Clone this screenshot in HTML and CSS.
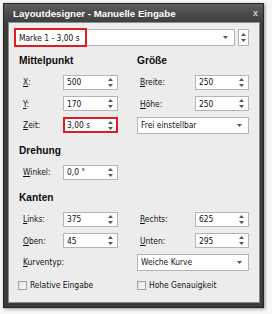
FILE: index.html
```html
<!DOCTYPE html>
<html>
<head>
<meta charset="utf-8">
<link rel="stylesheet" href="styles.css">
</head>
<body>
<div class="window">
  <div class="titlebar">
    <span class="title">Layoutdesigner - Manuelle Eingabe</span>
    <span class="close">x</span>
  </div>
  <div class="content">
    <div class="toprow">
      <div class="combo wide"><span class="hl">Marke 1 - 3,00 s</span><svg class="dd" width="5" height="3" viewBox="0 0 5 3"><path d="M0 0H5L2.5 3Z"/></svg></div>
      <div class="spinbtn"><svg width="5" height="9" viewBox="0 0 5 9"><path d="M2.5 0L5 3H0Z M0 6H5L2.5 9Z"/></svg></div>
    </div>

    <div class="cols">
      <div class="col left">
        <div class="heading">Mittelpunkt</div>
        <div class="row"><label><u>X</u>:</label><div class="spin"><span>500</span><svg width="5" height="9" viewBox="0 0 5 9"><path d="M2.5 0L5 3H0Z M0 6H5L2.5 9Z"/></svg></div></div>
        <div class="row"><label><u>Y</u>:</label><div class="spin"><span>170</span><svg width="5" height="9" viewBox="0 0 5 9"><path d="M2.5 0L5 3H0Z M0 6H5L2.5 9Z"/></svg></div></div>
        <div class="row"><label><u>Z</u>eit:</label><div class="spin red"><span>3,00 s</span><svg width="5" height="9" viewBox="0 0 5 9"><path d="M2.5 0L5 3H0Z M0 6H5L2.5 9Z"/></svg></div></div>
      </div>
      <div class="col right">
        <div class="heading">Größe</div>
        <div class="row"><label><u>B</u>reite:</label><div class="spin"><span>250</span><svg width="5" height="9" viewBox="0 0 5 9"><path d="M2.5 0L5 3H0Z M0 6H5L2.5 9Z"/></svg></div></div>
        <div class="row"><label><u>H</u>öhe:</label><div class="spin"><span>250</span><svg width="5" height="9" viewBox="0 0 5 9"><path d="M2.5 0L5 3H0Z M0 6H5L2.5 9Z"/></svg></div></div>
        <div class="row"><div class="combo full"><span>Frei einstellbar</span><svg class="dd" width="5" height="3" viewBox="0 0 5 3"><path d="M0 0H5L2.5 3Z"/></svg></div></div>
      </div>
    </div>

    <div class="heading">Drehung</div>
    <div class="col left">
      <div class="row"><label><u>W</u>inkel:</label><div class="spin"><span>0,0 °</span><svg width="5" height="9" viewBox="0 0 5 9"><path d="M2.5 0L5 3H0Z M0 6H5L2.5 9Z"/></svg></div></div>
    </div>

    <div class="heading">Kanten</div>
    <div class="cols">
      <div class="col left">
        <div class="row"><label><u>L</u>inks:</label><div class="spin"><span>375</span><svg width="5" height="9" viewBox="0 0 5 9"><path d="M2.5 0L5 3H0Z M0 6H5L2.5 9Z"/></svg></div></div>
        <div class="row"><label><u>O</u>ben:</label><div class="spin"><span>45</span><svg width="5" height="9" viewBox="0 0 5 9"><path d="M2.5 0L5 3H0Z M0 6H5L2.5 9Z"/></svg></div></div>
        <div class="row"><label><u>K</u>urventyp:</label></div>
      </div>
      <div class="col right">
        <div class="row"><label><u>R</u>echts:</label><div class="spin"><span>625</span><svg width="5" height="9" viewBox="0 0 5 9"><path d="M2.5 0L5 3H0Z M0 6H5L2.5 9Z"/></svg></div></div>
        <div class="row"><label><u>U</u>nten:</label><div class="spin"><span>295</span><svg width="5" height="9" viewBox="0 0 5 9"><path d="M2.5 0L5 3H0Z M0 6H5L2.5 9Z"/></svg></div></div>
        <div class="row"><div class="combo full"><span>Weiche Kurve</span><svg class="dd" width="5" height="3" viewBox="0 0 5 3"><path d="M0 0H5L2.5 3Z"/></svg></div></div>
      </div>
    </div>

    <div class="cols checks">
      <div class="check"><span class="box"></span>Relative Eingabe</div>
      <div class="check"><span class="box"></span>Hohe Genauigkeit</div>
    </div>
  </div>
</div>
</body>
</html>
```

FILE: styles.css
```css
* { box-sizing: border-box; }
html, body { margin: 0; padding: 0; background: #f7f7f7; }
body {
  width: 272px; height: 314px;
  padding: 3px 0 0 3px;
  font-family: "DejaVu Sans Condensed", "Liberation Sans", sans-serif;
  font-size: 8.4px;
  color: #111;
}
.window {
  width: 261px; height: 305px;
  background: #3b3b3b;
  border: 1px solid #262626;
  padding: 0 3px 4px 4px;
  box-shadow: 1px 1px 3px rgba(0,0,0,0.4);
  display: flex; flex-direction: column;
}
.titlebar {
  height: 18px;
  display: flex; align-items: center; justify-content: space-between;
  margin: 0 -3px 0 -4px;
  padding: 0 5px 0 9px;
  background: linear-gradient(#606060, #4a4a4a 55%, #404040);
  color: #fff;
  font-family: "Liberation Sans", Arial, sans-serif;
  font-weight: bold;
  font-size: 9.7px;
}
.close { font-size: 9px; color: #cfcfcf; }
.content {
  flex: 1;
  background: #ececec;
  border: 1px solid #8c8c8c;
  padding: 6px 0 0 5px;
}
.toprow { display: flex; align-items: center; height: 17px; }
.combo {
  height: 17px;
  background: #fff;
  border: 1px solid #b4b4b4;
  display: flex; align-items: center; justify-content: space-between;
  padding: 0 6px 0 3px;
}
.combo.wide { width: 221px; padding-left: 0; }
.combo.full { width: 112px; }
.hl {
  border: 2px solid #e11b22;
  height: 19px;
  margin: -1px 0 -1px -1px;
  padding: 0 5px 0 3px;
  display: flex; align-items: center;
}
.spinbtn {
  width: 11px; height: 17px;
  margin-left: 3px;
  border: 1px solid #b4b4b4; background: #fff;
  display: flex; align-items: center; justify-content: center;
}
svg { fill: #555; display: block; }
.cols { display: flex; }
.col.left { width: 123px; }
.col.right { width: 118px; }
.heading {
  font-family: "Liberation Sans", Arial, sans-serif;
  font-weight: bold; font-size: 10.2px;
  height: 14px; line-height: 14px;
  margin: 8px 0 3.5px 5px;
  color: #0c0c0c;
}
.right .heading { margin-left: 0; }
.row { display: flex; align-items: center; height: 21.5px; padding-left: 9px; }
.right .row { padding-left: 3px; }
.right .row:has(.combo) { padding-left: 0; }
.left label { width: 40px; }
.right label { width: 55px; }
.spin {
  width: 55px; height: 15px;
  background: #fff; border: 1px solid #b4b4b4;
  display: flex; align-items: center; justify-content: space-between;
  padding: 0 4px 0 3px;
}
.right .spin { width: 54px; }
.spin.red { border: 2px solid #e11b22; height: 16px; padding-left: 2px; padding-right: 3px; }
.checks { margin-top: 5.5px; height: 13px; align-items: center; }
.check { display: flex; align-items: center; }
.check:first-child { width: 123px; padding-left: 4px; }
.box { width: 9px; height: 9px; border: 1px solid #a0a0a0; background: linear-gradient(135deg, #e4e4e4, #fafafa); margin-right: 3px; }
```
